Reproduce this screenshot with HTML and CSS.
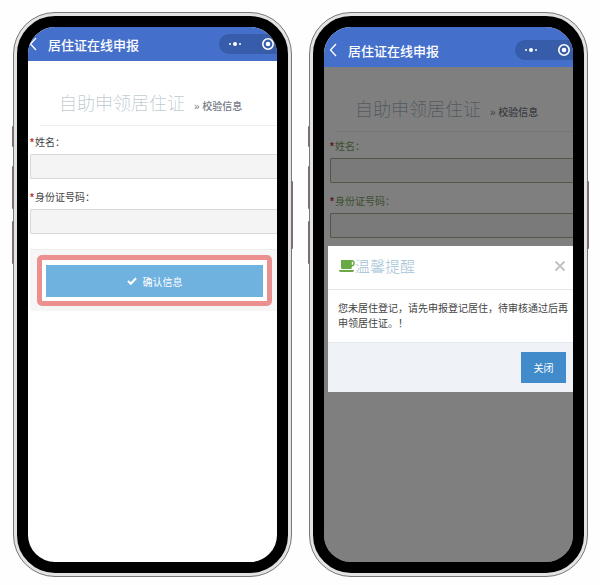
FILE: index.html
```
<!doctype html>
<html lang="zh-CN">
	<head>
		<meta charset="utf-8">
		<meta name="viewport" content="width=device-width, initial-scale=1">
		<title>居住证在线申报</title>
		<link rel="stylesheet" href="styles.css">
	</head>
	<body>

		<main class="phones">

			<section class="phone">
				<i class="key mute"></i><i class="key up"></i><i class="key down"></i><i class="key power"></i>
				<div class="screen">
					<header class="navbar">
						<button class="back" aria-label="返回">
							<svg width="8" height="14" viewBox="0 0 8 14"><path d="M7 1L1.5 7L7 13"/></svg>
						</button>
						<span class="title">居住证在线申报</span>
						<div class="capsule">
							<button aria-label="更多">
								<svg width="14" height="6" viewBox="0 0 14 6"><circle cx="2" cy="3" r="1"/><circle cx="7" cy="3" r="2"/><circle cx="12" cy="3" r="1"/></svg>
							</button>
							<button aria-label="退出">
								<svg width="14" height="14" viewBox="0 0 14 14"><circle class="ring" cx="7" cy="7" r="5.2"/><circle cx="7" cy="7" r="2.3"/></svg>
							</button>
						</div>
					</header>
					<div class="content">
						<h1>自助申领居住证 <small>» 校验信息</small></h1>
						<form>
							<label for="name"><b>*</b>姓名：</label>
							<input type="text" id="name">
							<label for="idcard"><b>*</b>身份证号码：</label>
							<input type="text" id="idcard">
							<div class="actions">
								<div class="highlight">
									<button type="button" class="confirm">
										<svg width="10" height="8" viewBox="0 0 10 8"><path d="M1 4L3.8 6.7L9 1.3"/></svg>
										确认信息
									</button>
								</div>
							</div>
						</form>
					</div>
				</div>
			</section>

			<section class="phone">
				<i class="key mute"></i><i class="key up"></i><i class="key down"></i><i class="key power"></i>
				<div class="screen">
					<header class="navbar tall">
						<button class="back" aria-label="返回">
							<svg width="8" height="14" viewBox="0 0 8 14"><path d="M7 1L1.5 7L7 13"/></svg>
						</button>
						<span class="title">居住证在线申报</span>
						<div class="capsule">
							<button aria-label="更多">
								<svg width="14" height="6" viewBox="0 0 14 6"><circle cx="2" cy="3" r="1"/><circle cx="7" cy="3" r="2"/><circle cx="12" cy="3" r="1"/></svg>
							</button>
							<button aria-label="退出">
								<svg width="14" height="14" viewBox="0 0 14 14"><circle class="ring" cx="7" cy="7" r="5.2"/><circle cx="7" cy="7" r="2.3"/></svg>
							</button>
						</div>
					</header>
					<div class="content checked">
						<h1>自助申领居住证 <small>» 校验信息</small></h1>
						<form>
							<label for="name2"><b>*</b>姓名：</label>
							<input type="text" id="name2">
							<label for="idcard2"><b>*</b>身份证号码：</label>
							<input type="text" id="idcard2">
						</form>
						<div class="backdrop">
							<div class="modal" role="dialog" aria-labelledby="tip">
								<div class="modal-header">
									<svg class="cup" width="16" height="14" viewBox="0 0 16 14"><path fill-rule="evenodd" d="M2 1H12.8C16.8 1 16.8 7.4 12.8 7.4V8.4C12.8 9.4 12.2 10 11.2 10H3.6C2.6 10 2 9.4 2 8.4ZM12.8 2.5V5.9C14.8 5.9 14.8 2.5 12.8 2.5ZM0 11H15C15 12.4 14.2 13 13 13H2C0.8 13 0 12.4 0 11Z"/></svg>
									<h2 id="tip">温馨提醒</h2>
									<button class="close" aria-label="关闭">
										<svg width="12" height="12" viewBox="0 0 12 12"><path d="M1.5 1.5L10.5 10.5M10.5 1.5L1.5 10.5"/></svg>
									</button>
								</div>
								<p>您未居住登记，请先申报登记居住，待审核通过后再申领居住证。！</p>
								<div class="modal-footer">
									<button>关闭</button>
								</div>
							</div>
						</div>
					</div>
				</div>
			</section>

		</main>

	</body>
</html>
```
FILE: styles.css
```
* {
	box-sizing: border-box;
}
body {
	margin: 0;
	background: #fefefe;
	color: #444;
	font-family: "Liberation Sans", "Noto Sans CJK SC", sans-serif;
	font-size: 10px;
}
button {
	padding: 0;
	border: 0;
	background: none;
	color: inherit;
	font: inherit;
}
svg {
	display: block;
}

/* phone frame */
.phones {
	display: flex;
	gap: 17px;
	min-height: 100vh;
	padding: 12px 12px 8px 13px;
}
.phone {
	position: relative;
	flex: 1;
	display: flex;
	min-width: 0;
	padding: 3px;
	border: 1px solid #777;
	border-radius: 42px;
	background: #e4e2e2;
}
.screen {
	flex: 1;
	display: flex;
	flex-direction: column;
	min-width: 0;
	overflow: hidden;
	border: 11px solid #000;
	border-radius: 38px;
	background: #fff;
}
.key {
	position: absolute;
	left: -2px;
	width: 2px;
	height: 43px;
	border-radius: 1px;
	background: #77706f;
}
.mute {
	top: 113px;
	height: 21px;
}
.up {
	top: 153px;
}
.down {
	top: 208px;
}
.power {
	top: 168px;
	left: auto;
	right: -2px;
	height: 68px;
}

/* title bar */
.navbar {
	display: flex;
	align-items: center;
	height: 34px;
	padding-left: 1px;
	background: #446fca;
	color: #fff;
}
.tall {
	height: 40px;
	padding: 6px 0 0 5px;
}
.back path {
	fill: none;
	stroke: #fff;
	stroke-width: 1.3;
}
.title {
	flex: 1;
	padding-left: 11px;
	font-size: 13px;
	font-weight: 500;
	white-space: nowrap;
}
.capsule {
	display: flex;
	justify-content: space-between;
	align-items: center;
	width: 58px;
	height: 20px;
	padding: 0 2px 0 9px;
	border-radius: 10px 0 0 10px;
	background: #375ca9;
}
.capsule svg {
	fill: #fff;
}
.capsule .ring {
	fill: none;
	stroke: #fff;
	stroke-width: 1.6;
}

/* form page */
.content {
	position: relative;
	flex: 1;
	padding: 25px 0 0 2px;
}
h1 {
	margin: 0 0 9px 10px;
	padding-left: 19px;
	border-bottom: 1px solid #eee;
	color: #a9b7bf;
	font-size: 18px;
	font-weight: 100;
	line-height: 37px;
	white-space: nowrap;
}
h1 small {
	margin-left: 4px;
	color: #777c88;
	font-size: 10px;
	font-weight: 500;
}
label {
	display: block;
	font-size: 10px;
	line-height: 16px;
}
label b {
	margin-right: 1px;
	color: #b33;
}
input {
	display: block;
	width: 100%;
	height: 25px;
	margin: 3px 0 11px;
	border: 1px solid #d8d8d8;
	border-right: 0;
	border-radius: 2px 0 0 2px;
	background: #f4f4f4;
}
.actions {
	margin-top: 15px;
	padding: 5px 5px 5px 7px;
	border-top: 1px solid #eee;
	background: #f6f6f6;
}
.highlight {
	padding: 5px 4px 4px;
	border: 5px solid #ec8f8f;
	border-radius: 5px;
	background: #fff;
}
.confirm {
	display: flex;
	justify-content: center;
	align-items: center;
	gap: 6px;
	width: 100%;
	height: 32px;
	background: #6fb1df;
	color: #fff;
}
.confirm path {
	fill: none;
	stroke: #fff;
	stroke-width: 2.2;
}

/* validated form under the dialog */
.checked {
	padding-left: 6px;
}
.checked h1 {
	margin: 0 0 7px 6px;
	color: #8496aa;
}
.checked label {
	color: #7ba065;
}
.checked input {
	border-color: #9cb18b;
}
.backdrop {
	position: absolute;
	inset: 0;
	padding: 179px 0 0 4px;
	background: rgba(0, 0, 0, 0.5);
}
.modal {
	background: #fff;
}
.modal-header {
	display: flex;
	align-items: center;
	height: 44px;
	padding: 0 7px 4px 11px;
	border-bottom: 1px solid #e8e8e8;
}
.cup {
	fill: #69aa46;
}
h2 {
	flex: 1;
	margin: 0;
	color: #a3c3d5;
	font-size: 15px;
	font-weight: 300;
}
.close path {
	fill: none;
	stroke: #c4c4c4;
	stroke-width: 2;
}
.modal p {
	margin: 0;
	padding: 11px 4px 11px 10px;
	font-size: 10px;
	line-height: 15px;
}
.modal-footer {
	display: flex;
	justify-content: flex-end;
	padding: 9px 7px;
	border-top: 1px solid #e4e9ee;
	background: #eff3f8;
}
.modal-footer button {
	width: 45px;
	height: 31px;
	background: #428bca;
	color: #fff;
}
```
